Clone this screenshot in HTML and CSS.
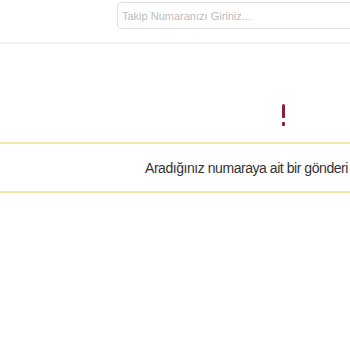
FILE: index.html
```html
<!DOCTYPE html>
<html lang="tr">
<head>
  <meta charset="UTF-8" />
  <meta name="viewport" content="width=device-width, initial-scale=1.0">
  <title>Gönderi Takip</title>
  <link rel="stylesheet" href="styles.css">
</head>
<body>
  <div class="search-bar">
    <input type="text" class="track-input" placeholder="Takip Numaranızı Giriniz...">
  </div>
  <div class="alert-icon">
    <span class="bang-bar"></span>
    <span class="bang-dot"></span>
  </div>
  <div class="message">Aradığınız numaraya ait bir gönderi</div>
</body>
</html>
```

FILE: styles.css
```css
/* Reset */
* { margin: 0; padding: 0; box-sizing: border-box; }
body {
  font-family: "Liberation Sans", Arial, sans-serif;
  background: #fff;
  overflow: hidden;
}
/* Search */
.search-bar {
  height: 44px;
  padding: 2px 0 0 117px;
  border-bottom: 2px solid #f1f1f1;
  overflow: hidden;
}
.track-input {
  width: 300px;
  height: 27px;
  padding: 0 4px;
  border: 1px solid #e2e2e2;
  border-radius: 4px;
  font-family: inherit;
  font-size: 11px;
  outline: none;
}
.track-input::placeholder { color: #bdbdbd; }
/* Icon */
.alert-icon {
  display: flex;
  flex-direction: column;
  align-items: center;
  gap: 4px;
  width: 4px;
  margin: 60px 0 16px 281px;
}
.bang-bar {
  width: 3px;
  height: 14px;
  background: #8a1c44;
  border-radius: 2px 2px 1px 1px;
}
.bang-dot {
  width: 3px;
  height: 4px;
  background: #8a1c44;
  border-radius: 1px;
}
/* Message */
.message {
  padding: 16px 0 15px 145px;
  border-top: 2px solid #f3e6ab;
  border-bottom: 2px solid #f3e6ab;
  font-size: 14px;
  line-height: 16px;
  letter-spacing: -0.45px;
  color: #333;
  white-space: nowrap;
}
```
